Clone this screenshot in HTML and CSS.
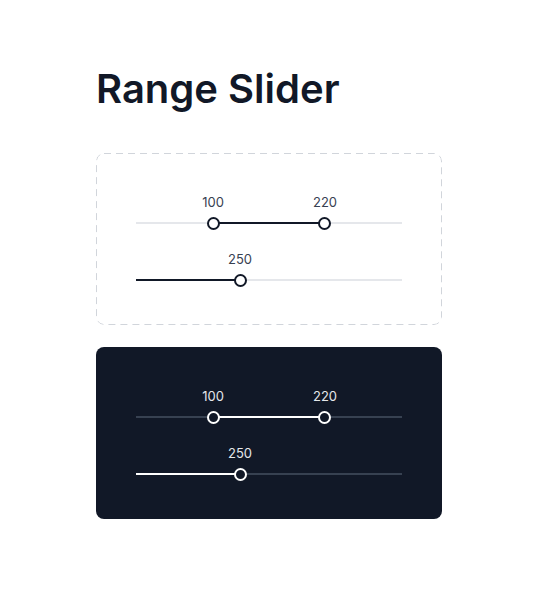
FILE: index.html
```html
<!DOCTYPE html>
<html lang="en">
<head>
  <meta charset="UTF-8" />
  <title>Range Slider</title>
  <link rel="stylesheet" href="styles.css">
</head>
<body>

  <main class="page">
    <h1>Range Slider</h1>

    <!-- light variant -->
    <section class="panel panel-light">
      <div class="slider">
        <span class="value" style="left: 28.95%">100</span>
        <span class="value" style="left: 71.05%">220</span>
        <div class="rail"></div>
        <div class="fill" style="left: 28.95%; width: 42.1%"></div>
        <span class="thumb" style="left: 28.95%"></span>
        <span class="thumb" style="left: 71.05%"></span>
      </div>
      <div class="slider">
        <span class="value" style="left: 39.1%">250</span>
        <div class="rail"></div>
        <div class="fill" style="left: 0; width: 39.1%"></div>
        <span class="thumb" style="left: 39.1%"></span>
      </div>
    </section>

    <!-- dark variant -->
    <section class="panel panel-dark">
      <div class="slider">
        <span class="value" style="left: 28.95%">100</span>
        <span class="value" style="left: 71.05%">220</span>
        <div class="rail"></div>
        <div class="fill" style="left: 28.95%; width: 42.1%"></div>
        <span class="thumb" style="left: 28.95%"></span>
        <span class="thumb" style="left: 71.05%"></span>
      </div>
      <div class="slider">
        <span class="value" style="left: 39.1%">250</span>
        <div class="rail"></div>
        <div class="fill" style="left: 0; width: 39.1%"></div>
        <span class="thumb" style="left: 39.1%"></span>
      </div>
    </section>
  </main>

</body>
</html>
```

FILE: styles.css
```css
:root {
  --ink: #111827;
  --ink-soft: #374151;
  --line: #e5e7eb;
  --white: #ffffff;
}
* {
  box-sizing: border-box;
}
body {
  margin: 0;
  background: var(--white);
  color: var(--ink);
  font-family: Inter, "Liberation Sans", sans-serif;
}
.page {
  width: 346px;
  margin: 0 auto;
  padding-top: 65px;
}
h1 {
  margin: 0 0 40px;
  font-size: 40px;
  line-height: 48px;
  font-weight: 600;
  color: var(--ink);
}
.panel {
  border-radius: 8px;
  padding: 40px;
  margin-bottom: 22px;
}
/* longer dashes than the browser's 1px dashed border */
.panel-light {
  background-image: url("data:image/svg+xml,%3Csvg xmlns='http://www.w3.org/2000/svg' width='100%25' height='100%25'%3E%3Crect x='0.5' y='0.5' width='calc(100%25 - 1px)' height='calc(100%25 - 1px)' rx='7.5' fill='none' stroke='%23d1d5db' stroke-width='1' stroke-dasharray='7 5'/%3E%3C/svg%3E");
  --track: var(--line);
  --active: var(--ink);
  --knob: var(--white);
  --label: var(--ink-soft);
}
.panel-dark {
  background: var(--ink);
  --track: #374151;
  --active: var(--white);
  --knob: var(--ink);
  --label: #e5e7eb;
}
.slider {
  position: relative;
  height: 35px;
}
.slider + .slider {
  margin-top: 22px;
}
.value {
  position: absolute;
  top: -1px;
  transform: translateX(-50%);
  font-size: 13px;
  line-height: 20px;
  color: var(--label);
}
.rail,
.fill {
  position: absolute;
  top: 29px;
  height: 2px;
}
.rail {
  left: 0;
  right: 0;
  background: var(--track);
}
.fill {
  background: var(--active);
}
.thumb {
  position: absolute;
  top: 23.5px;
  width: 13px;
  height: 13px;
  margin-left: -6.5px;
  border: 2px solid var(--active);
  border-radius: 50%;
  background: var(--knob);
}
```
